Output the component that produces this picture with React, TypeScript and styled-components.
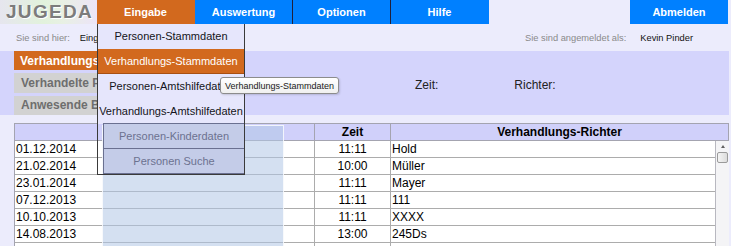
import React from 'react';
import styled, { createGlobalStyle } from 'styled-components';

const Global = createGlobalStyle`
  html, body { margin: 0; padding: 0; background: #ececfc; overflow: hidden; }
  body { font-family: "Liberation Sans", Arial, sans-serif; }
  * { box-sizing: border-box; }
`;

const ORANGE = '#d2691e';
const BLUE = '#0080ff';

const Page = styled.div`
  position: relative;
  width: 731px;
  height: 246px;
  overflow: hidden;
`;

const TopBar = styled.div`
  display: flex;
  height: 24px;
`;

const Logo = styled.div`
  width: 97px;
  display: flex;
  align-items: center;
  padding-left: 6px;
  background: linear-gradient(90deg, #e6e6ee 0%, #e2f2dc 45%, #e8f0e4 65%, #ece4f8 100%);
  font-weight: bold;
  font-size: 19px;
  letter-spacing: 1.3px;
  color: #7c7c7c;
  text-shadow: 1px 1px 0 #ffffff;
`;

const Nav = styled.nav`
  display: flex;
`;

const NavItem = styled.div<{ $active?: boolean; $last?: boolean }>`
  width: 98px;
  height: 24px;
  display: flex;
  align-items: center;
  justify-content: center;
  background: ${p => (p.$active ? ORANGE : BLUE)};
  border-right: 1px solid ${p => (p.$active ? ORANGE : p.$last ? BLUE : '#20203a')};
  color: #ffffff;
  font-weight: bold;
  font-size: 11px;
`;

const Spacer = styled.div`
  flex: 1;
`;

const Logout = styled(NavItem)`
  margin-right: 3px;
  border-right: none;
`;

const Crumbs = styled.div`
  display: flex;
  align-items: center;
  height: 27px;
  padding: 0 38px 0 16px;
  font-size: 9.3px;
  color: #111;
`;

const Muted = styled.span`
  color: #8a8a8a;
`;

const CrumbGroup = styled.div<{ $gap: number }>`
  display: flex;
  gap: ${p => p.$gap}px;
`;

const Right = styled(CrumbGroup)`
  margin-left: auto;
`;

const Panel = styled.div`
  display: flex;
  height: 64px;
  background: #d4d4fc;
  margin-right: 2px;
`;

const Tabs = styled.div`
  margin-left: 14px;
  width: 130px;
  display: flex;
  flex-direction: column;
  gap: 3px;
`;

const Tab = styled.div<{ $active?: boolean }>`
  height: 20px;
  display: flex;
  align-items: center;
  padding-left: ${p => (p.$active ? 6 : 7)}px;
  background: ${p => (p.$active ? ORANGE : '#d2d2d2')};
  color: ${p => (p.$active ? '#ffffff' : '#6e6e6e')};
  font-weight: bold;
  font-size: 12px;
  white-space: nowrap;
  overflow: hidden;
`;

const Fields = styled.div`
  display: flex;
  gap: 76px;
  margin-left: 271px;
  padding-top: 27px;
  font-size: 12px;
  color: #222;
`;

const TableWrap = styled.div`
  margin: 8px 2px 0 14px;
  border-left: 1px solid #a4a4b0;
`;

const HeadRow = styled.div`
  display: grid;
  grid-template-columns: 300px 76px 1fr;
  height: 18px;
  background: #d0d0fa;
  border-top: 1px solid #a4a4b0;
  border-bottom: 1px solid #a4a4b0;
  border-right: 1px solid #a4a4b0;
`;

const HeadCell = styled.div`
  display: flex;
  align-items: center;
  justify-content: center;
  font-weight: bold;
  font-size: 12px;
  color: #000;
  border-right: 1px solid #a4a4b0;
  &:last-child { border-right: none; }
`;

const Body = styled.div`
  display: flex;
`;

const Rows = styled.div`
  flex: 1;
  background: #ffffff;
`;

const Row = styled.div`
  display: grid;
  grid-template-columns: 300px 76px 1fr;
  height: 17px;
  border-bottom: 1px solid #acacac;
`;

const Cell = styled.div<{ $center?: boolean }>`
  display: flex;
  align-items: center;
  justify-content: ${p => (p.$center ? 'center' : 'flex-start')};
  padding-left: ${p => (p.$center ? 0 : 1)}px;
  font-size: 12px;
  color: #000;
  border-right: 1px solid #acacac;
  &:last-child { border-right: none; }
`;

const Scrollbar = styled.div`
  width: 14px;
  background: #f4f4f6;
  border-left: 1px solid #b8b8c0;
  display: flex;
  flex-direction: column;
  align-items: center;
  padding-top: 4px;
  gap: 4px;
`;

const Arrow = styled.div`
  width: 0;
  height: 0;
  border-left: 2.5px solid transparent;
  border-right: 2.5px solid transparent;
  border-bottom: 3px solid #606060;
`;

const Thumb = styled.div`
  width: 11px;
  height: 11px;
  border: 1px solid #9a9a9a;
  border-radius: 2px;
  background: linear-gradient(90deg, #f4f4f4, #dcdcdc);
`;

const Ghost = styled.div`
  position: absolute;
  left: 102px;
  top: 125px;
  width: 182px;
  height: 140px;
  background: rgba(176, 198, 230, 0.55);
  border: 1px solid rgba(255, 255, 255, 0.8);
  z-index: 2;
`;

const Menu = styled.div`
  position: absolute;
  left: 97px;
  top: 24px;
  width: 148px;
  border-left: 1px solid #3a3a3a;
  border-right: 1px solid #3a3a3a;
  border-bottom: 1px solid #3a3a3a;
  z-index: 3;
`;

const MenuItem = styled.div<{ $active?: boolean }>`
  height: 25px;
  display: flex;
  align-items: center;
  justify-content: center;
  white-space: nowrap;
  background: ${p => (p.$active ? ORANGE : '#e6e6fc')};
  color: ${p => (p.$active ? '#ffffff' : '#141420')};
  font-size: 11px;
  border-bottom: 1px solid ${p => (p.$active ? '#a84f12' : '#e6e6fc')};
`;

const GhostItem = styled.div`
  margin-left: 5px;
  height: 26px;
  display: flex;
  align-items: center;
  justify-content: center;
  background: #c4cce8;
  border: 1px solid #6a7090;
  border-right: none;
  margin-top: -1px;
  color: #6c7290;
  font-size: 11px;
  &:first-of-type { margin-top: 2px; }
`;

const Tooltip = styled.div`
  position: absolute;
  left: 220px;
  top: 77px;
  height: 17px;
  padding: 0 4px;
  display: flex;
  align-items: center;
  font-size: 9px;
  color: #202020;
  background: linear-gradient(#ffffff, #f0f0f0);
  border: 1px solid #8c8c8c;
  border-radius: 3px;
  box-shadow: 1px 1px 2px rgba(0, 0, 0, 0.15);
  white-space: nowrap;
  z-index: 4;
`;

const rows = [
  ['01.12.2014', '11:11', 'Hold'],
  ['21.02.2014', '10:00', 'Müller'],
  ['23.01.2014', '11:11', 'Mayer'],
  ['07.12.2013', '11:11', '111'],
  ['10.10.2013', '11:11', 'XXXX'],
  ['14.08.2013', '13:00', '245Ds'],
  ['02.07.2013', '09:30', 'Schmidt'],
];

export default function App() {
  return (
    <Page>
      <Global />
      <TopBar>
        <Logo>JUGEDA</Logo>
        <Nav>
          <NavItem $active>Eingabe</NavItem>
          <NavItem>Auswertung</NavItem>
          <NavItem>Optionen</NavItem>
          <NavItem $last>Hilfe</NavItem>
        </Nav>
        <Spacer />
        <Logout>Abmelden</Logout>
      </TopBar>
      <Crumbs>
        <CrumbGroup $gap={10}>
          <Muted>Sie sind hier:</Muted>
          <span>Eingabe &gt; Verhandlungsdaten &gt; Admin</span>
        </CrumbGroup>
        <Right $gap={14}>
          <Muted>Sie sind angemeldet als:</Muted>
          <span>Kevin Pinder</span>
        </Right>
      </Crumbs>
      <Panel>
        <Tabs>
          <Tab $active>Verhandlungstermin</Tab>
          <Tab>Verhandelte Personen</Tab>
          <Tab>Anwesende Beteiligte</Tab>
        </Tabs>
        <Fields>
          <span>Zeit:</span>
          <span>Richter:</span>
        </Fields>
      </Panel>
      <TableWrap>
        <HeadRow>
          <HeadCell>Datum</HeadCell>
          <HeadCell>Zeit</HeadCell>
          <HeadCell>Verhandlungs-Richter</HeadCell>
        </HeadRow>
        <Body>
          <Rows>
            {rows.map(r => (
              <Row key={r[0]}>
                <Cell>{r[0]}</Cell>
                <Cell $center>{r[1]}</Cell>
                <Cell>{r[2]}</Cell>
              </Row>
            ))}
          </Rows>
          <Scrollbar>
            <Arrow />
            <Thumb />
          </Scrollbar>
        </Body>
      </TableWrap>
      <Ghost />
      <Menu>
        <MenuItem>Personen-Stammdaten</MenuItem>
        <MenuItem $active>Verhandlungs-Stammdaten</MenuItem>
        <MenuItem>Personen-Amtshilfedaten</MenuItem>
        <MenuItem>Verhandlungs-Amtshilfedaten</MenuItem>
        <GhostItem>Personen-Kinderdaten</GhostItem>
        <GhostItem>Personen Suche</GhostItem>
      </Menu>
      <Tooltip>Verhandlungs-Stammdaten</Tooltip>
    </Page>
  );
}
